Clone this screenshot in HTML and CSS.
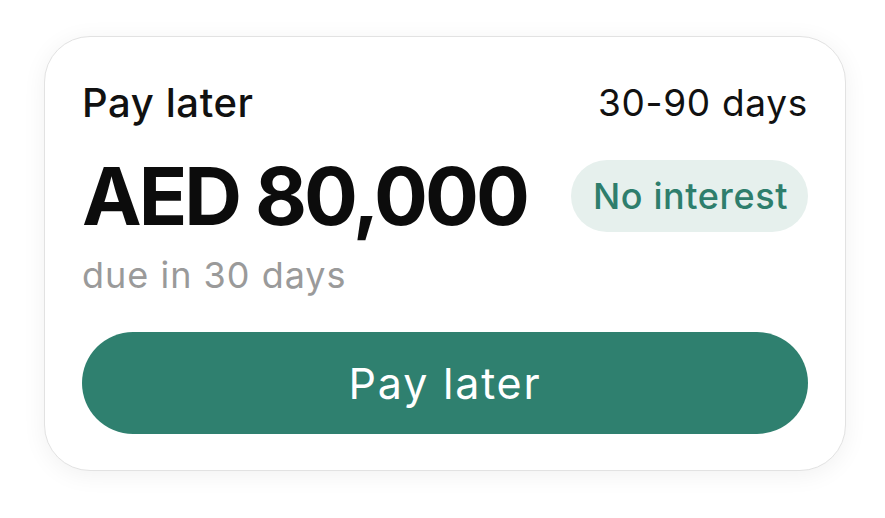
FILE: index.html
```html
<!DOCTYPE html>
<html>
<head>
<meta charset="utf-8">
<link rel="stylesheet" href="styles.css">
</head>
<body>
<div class="card">
  <div class="row top">
    <span class="label">Pay later</span>
    <span class="term">30-90 days</span>
  </div>
  <div class="row mid">
    <span class="amount">AED 80,000</span>
    <span class="badge">No interest</span>
  </div>
  <div class="due">due in 30 days</div>
  <button class="btn">Pay later</button>
</div>
</body>
</html>
```
FILE: styles.css
```css
html, body { margin: 0; padding: 0; background: #fff; }
body {
  width: 885px; height: 518px;
  font-family: Inter, "Noto Sans", sans-serif;
  padding: 36px 0 0 44px;
  box-sizing: border-box;
}
.card {
  width: 802px;
  height: 435px;
  box-sizing: border-box;
  border: 1px solid #e2e2e2;
  border-radius: 46px;
  background: #fff;
  box-shadow: 0 4px 24px rgba(0,0,0,0.06);
  padding: 43px 37px 0 37px;
  display: flex;
  flex-direction: column;
}
.row { display: flex; justify-content: space-between; align-items: center; }
.label { font-size: 40px; font-weight: 500; color: #111; line-height: 46px; letter-spacing: 0.6px; }
.term { font-size: 37px; color: #111; line-height: 46px; letter-spacing: 0.7px; }
.mid { margin-top: 33px; height: 74px; }
.amount { font-size: 80px; font-weight: 700; color: #0c0c0c; letter-spacing: -3px; line-height: 74px; }
.badge {
  background: #e6f0ed; color: #2e7e6c;
  font-size: 36px; font-weight: 500;
  height: 72px; line-height: 72px;
  padding: 0 20px 0 22px; border-radius: 36px;
  letter-spacing: 0.6px;
}
.due { margin-top: 20px; font-size: 36px; color: #9a9a9a; line-height: 44px; letter-spacing: 1px; }
.btn {
  margin-top: 35px;
  height: 102px; border: 0; border-radius: 51px;
  background: #2f806f; color: #fff;
  font-family: inherit; font-size: 43px; font-weight: 400; letter-spacing: 1.8px;
}
```
